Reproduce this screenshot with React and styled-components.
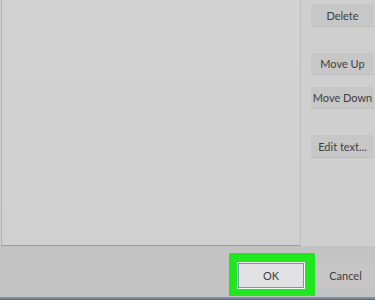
import React from 'react';
import styled, { createGlobalStyle } from 'styled-components';

const GlobalStyle = createGlobalStyle`
  html, body {
    margin: 0;
    padding: 0;
    width: 375px;
    height: 300px;
    overflow: hidden;
    background: #cecece;
    font-family: Lato, "Noto Sans", sans-serif;
  }
`;

const Dialog = styled.div`
  display: flex;
  flex-direction: column;
  width: 375px;
  height: 300px;
`;

const Main = styled.div`
  display: flex;
  height: 246px;
  background: #cfcfcf;
`;

const ListPanel = styled.div`
  width: 298px;
  margin-left: 1px;
  border-left: 1px solid #b0b0b0;
  border-bottom: 1px solid #9e9e9e;
  border-right: 1px solid #bdbdbd;
  background: linear-gradient(#d2d2d2, #d0d0d0);
`;

const SideColumn = styled.div`
  display: flex;
  flex-direction: column;
  padding: 4px 0 0 10px;
`;

const SideButton = styled.div`
  width: 63px;
  height: ${(p) => p.$h || 23}px;
  margin-top: ${(p) => p.$gap || 0}px;
  display: flex;
  align-items: center;
  justify-content: center;
  background: #c7c7c7;
  border-bottom: 1px solid #bebebe;
  color: #404040;
  font-size: 11px;
  box-sizing: border-box;
`;

const BottomBar = styled.div`
  display: flex;
  justify-content: flex-end;
  align-items: flex-start;
  height: 51px;
  padding-top: 7px;
  box-sizing: border-box;
  background: #c3c3c3;
`;

const Highlight = styled.div`
  background: #1fe81f;
  padding: 10px 11px 8px 9px;
  margin-right: 1px;
`;

const OkButton = styled.div`
  width: 66px;
  height: 25px;
  box-sizing: border-box;
  display: flex;
  align-items: center;
  justify-content: center;
  background: #e2e2e4;
  border: 1px solid #7a95bd;
  box-shadow: 0 0 0 1px #f4f6fa;
  color: #404040;
  font-size: 11px;
`;

const CancelButton = styled.div`
  width: 59px;
  height: 25px;
  margin-top: 10px;
  display: flex;
  align-items: center;
  justify-content: center;
  background: #c6c6c6;
  color: #404040;
  font-size: 11px;
`;

const Strip = styled.div`
  height: 3px;
  background: linear-gradient(#8da3bd, #5b6675);
`;

export default function App() {
  return (
    <>
      <GlobalStyle />
      <Dialog>
        <Main>
          <ListPanel />
          <SideColumn>
            <SideButton $h={23}>Delete</SideButton>
            <SideButton $h={22} $gap={26}>Move Up</SideButton>
            <SideButton $h={22} $gap={12}>Move Down</SideButton>
            <SideButton $h={23} $gap={26}>Edit text...</SideButton>
          </SideColumn>
        </Main>
        <BottomBar>
          <Highlight>
            <OkButton>OK</OkButton>
          </Highlight>
          <CancelButton>Cancel</CancelButton>
        </BottomBar>
        <Strip />
      </Dialog>
    </>
  );
}
